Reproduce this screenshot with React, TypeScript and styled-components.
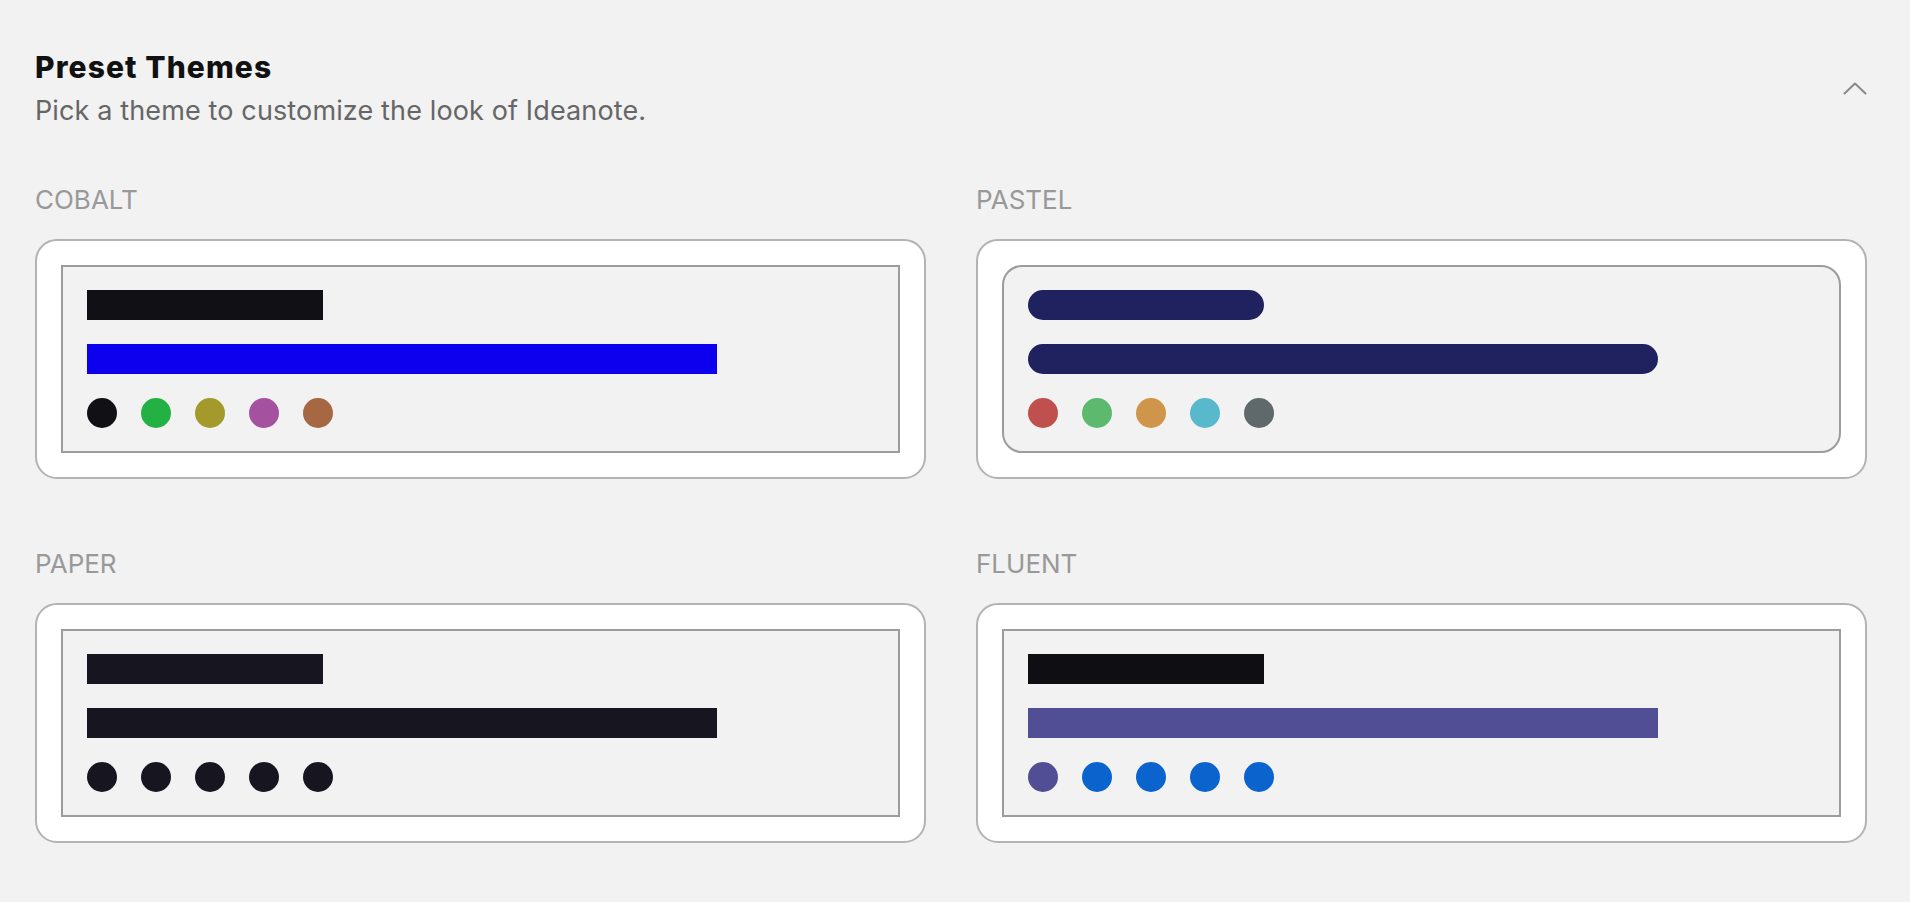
import styled, { createGlobalStyle } from "styled-components";

type Theme = {
  name: string;
  bars: [string, string];
  dots: string[];
  rounded?: boolean;
};

const themes: Theme[] = [
  {
    name: "Cobalt",
    bars: ["#111015", "#0c00ee"],
    dots: ["#111015", "#22b142", "#a39a2b", "#a4529f", "#a66843"],
  },
  {
    name: "Pastel",
    bars: ["#1f225e", "#1f225e"],
    dots: ["#c0504d", "#5cb96e", "#cf964b", "#58b8cc", "#5f686a"],
    rounded: true,
  },
  {
    name: "Paper",
    bars: ["#17151f", "#17151f"],
    dots: ["#17151f", "#17151f", "#17151f", "#17151f", "#17151f"],
  },
  {
    name: "Fluent",
    bars: ["#0f0e12", "#514e95"],
    dots: ["#514e95", "#0b63cd", "#0b63cd", "#0b63cd", "#0b63cd"],
  },
];

function ThemeCard({ theme }: { theme: Theme }) {
  return (
    <Option>
      <Label>{theme.name}</Label>
      <Card>
        <Preview $rounded={theme.rounded}>
          <Bar $color={theme.bars[0]} $width={30} $rounded={theme.rounded} />
          <Bar $color={theme.bars[1]} $width={80} $rounded={theme.rounded} />
          <Dots>
            {theme.dots.map((color, i) => (
              <Dot key={i} $color={color} />
            ))}
          </Dots>
        </Preview>
      </Card>
    </Option>
  );
}

function App() {
  return (
    <>
      <GlobalStyle />
      <Page>
        <Header>
          <div>
            <Title>Preset Themes</Title>
            <Subtitle>Pick a theme to customize the look of Ideanote.</Subtitle>
          </div>
          <Toggle aria-label="Collapse">
            <svg width="24" height="13" viewBox="0 0 24 13" fill="none">
              <polyline
                points="1.5,11.5 12,1.5 22.5,11.5"
                stroke="#8a8a8a"
                strokeWidth="2"
                strokeLinecap="round"
                strokeLinejoin="round"
              />
            </svg>
          </Toggle>
        </Header>

        <Grid>
          {themes.map((theme) => (
            <ThemeCard key={theme.name} theme={theme} />
          ))}
        </Grid>
      </Page>
    </>
  );
}

export default App;

const GlobalStyle = createGlobalStyle`
  body {
    margin: 0;
    background: #f2f2f2;
    font-family: Inter, "Noto Sans", sans-serif;
  }
`;

const Page = styled.div`
  padding: 50px 43px 0 35px;
  min-height: 902px;
  box-sizing: border-box;
`;

const Header = styled.div`
  display: flex;
  align-items: center;
  justify-content: space-between;
`;

const Title = styled.h2`
  margin: 0;
  font-size: 30px;
  line-height: 34px;
  font-weight: 800;
  letter-spacing: 1.1px;
  color: #111111;
`;

const Subtitle = styled.p`
  margin: 11px 0 0;
  font-size: 27px;
  line-height: 32px;
  letter-spacing: 0.13px;
  color: #666666;
`;

const Toggle = styled.button`
  display: flex;
  border: 0;
  padding: 0;
  background: none;
  cursor: pointer;
`;

const Grid = styled.div`
  display: grid;
  grid-template-columns: 1fr 1fr;
  column-gap: 50px;
  row-gap: 69px;
  margin-top: 57px;
`;

const Option = styled.div`
  display: flex;
  flex-direction: column;
  gap: 23px;
`;

const Label = styled.span`
  font-size: 26px;
  line-height: 32px;
  color: #999999;
  text-transform: uppercase;
`;

const Card = styled.div`
  background: #ffffff;
  border: 2px solid #b3b3b3;
  border-radius: 22px;
  padding: 24px;
  cursor: pointer;
`;

const Preview = styled.div<{ $rounded?: boolean }>`
  display: flex;
  flex-direction: column;
  gap: 24px;
  padding: 23px 24px;
  background: #f2f2f2;
  border: 2px solid #9c9c9c;
  border-radius: ${(p) => (p.$rounded ? "20px" : "0")};
`;

const Bar = styled.div<{ $color: string; $width: number; $rounded?: boolean }>`
  height: 30px;
  width: ${(p) => p.$width}%;
  background: ${(p) => p.$color};
  border-radius: ${(p) => (p.$rounded ? "15px" : "0")};
`;

const Dots = styled.div`
  display: flex;
  gap: 24px;
`;

const Dot = styled.span<{ $color: string }>`
  width: 30px;
  height: 30px;
  border-radius: 50%;
  background: ${(p) => p.$color};
`;
